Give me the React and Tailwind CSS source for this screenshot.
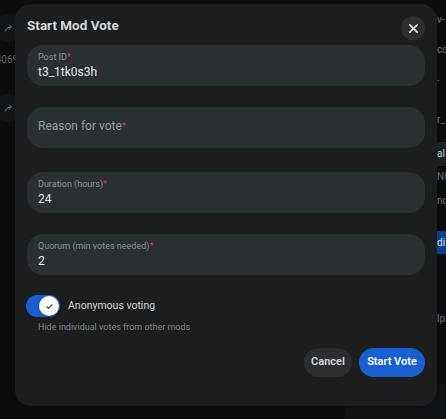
import React from "react";

function ShareIcon() {
  return (
    <svg width="10" height="10" viewBox="0 0 20 20" fill="none" stroke="#6f777c" strokeWidth="2" strokeLinecap="round" strokeLinejoin="round">
      <path d="M3 16c1-5 5-8 11-8" />
      <path d="M11 4l4 4-4 4" />
    </svg>
  );
}

function Field({ label, value, className = "" }) {
  return (
    <div className={`h-[41px] rounded-[16px] bg-[#2a2f31] pl-[11px] pt-[7px] flex flex-col gap-[2px] ${className}`}>
      <div className="text-[9px] leading-[11px] text-[#8b959a]">
        {label}
        <span className="text-[#d9423c]">*</span>
      </div>
      <div className="text-[12px] leading-[15px] text-[#e9ebec]">{value}</div>
    </div>
  );
}

export default function App() {
  return (
    <div className="relative w-[446px] h-[419px] overflow-hidden bg-[#0a0c0d] font-['Roboto',sans-serif]">
      {/* dimmed page behind */}
      <div className="flex h-full">
        <div className="w-[24px] flex flex-col items-center pt-[14px]">
          <div className="w-[28px] h-[28px] rounded-full bg-[#111416] flex items-center justify-center -ml-[6px]">
            <ShareIcon />
          </div>
          <div className="mt-[12px] text-[10px] leading-[12px] text-[#5d6468] -ml-[10px]">4069</div>
          <div className="mt-[28px] w-[28px] h-[28px] rounded-full bg-[#111416] flex items-center justify-center -ml-[6px]">
            <ShareIcon />
          </div>
        </div>
        <div className="flex-1" />
        <div className="w-[9px] flex flex-col text-[10px] leading-[12px] text-[#6a7276] pt-[14px] whitespace-nowrap">
          <div>v-</div>
          <div className="mt-[18px]">co</div>
          <div className="mt-[16px]">.</div>
          <div className="mt-[30px]">r_</div>
          <div className="mt-[16px] h-[24px] bg-[#1b1f21] text-[#c9cdd0] flex items-center">al</div>
          <div className="mt-[5px]">NG</div>
          <div className="mt-[12px]">nc</div>
          <div className="mt-[24px] h-[23px] bg-[#0d3e8c] text-[#dfe6f2] flex items-center">di</div>
          <div className="mt-[59px]">lp</div>
        </div>
      </div>
      <div className="absolute left-[345px] top-[384px] w-[101px] h-[35px] bg-[#0f1214]" />

      {/* modal */}
      <div className="absolute left-[15px] top-[4px] w-[422px] h-[402px] rounded-[16px] bg-[#1b1d1f] px-[12px] pt-[12px] flex flex-col">
        <div className="flex items-start justify-between">
          <div className="text-[13.5px] leading-[18px] font-bold text-[#d5d8da]">Start Mod Vote</div>
          <button className="w-[24px] h-[24px] rounded-full bg-[#2b2f32] flex items-center justify-center">
            <svg width="11" height="11" viewBox="0 0 12 12" stroke="#e4e6e7" strokeWidth="1.8" strokeLinecap="round">
              <path d="M2 2l8 8M10 2l-8 8" />
            </svg>
          </button>
        </div>

        <Field label="Post ID" value="t3_1tk0s3h" className="mt-[5px]" />

        <div className="mt-[21px] h-[41px] rounded-[16px] bg-[#2a2f31] pl-[11px] pb-[3px] flex items-center">
          <div className="text-[12px] leading-[15px] text-[#959ea3]">
            Reason for vote<span className="text-[#d9423c] text-[9px] align-top">*</span>
          </div>
        </div>

        <Field label="Duration (hours)" value="24" className="mt-[24px]" />
        <Field label="Quorum (min votes needed)" value="2" className="mt-[21px]" />

        <div className="mt-[20px] flex items-center">
          <div className="w-[34px] h-[22px] rounded-full bg-[#1a5fd0] flex items-center justify-end pr-[1px] -ml-[1px]">
            <div className="w-[20px] h-[20px] rounded-full bg-white flex items-center justify-center shadow-[0_1px_2px_rgba(0,0,0,0.4)]">
              <svg width="9" height="9" viewBox="0 0 12 12" fill="none" stroke="#3a3f42" strokeWidth="1.6" strokeLinecap="round" strokeLinejoin="round">
                <path d="M2.5 6.3l2.3 2.3 4.7-5" />
              </svg>
            </div>
          </div>
          <div className="ml-[8px] text-[10.5px] text-[#d6d9db]">Anonymous voting</div>
        </div>
        <div className="mt-[4px] pl-[11px] text-[9px] leading-[12px] text-[#7d878c]">Hide individual votes from other mods</div>

        <div className="mt-[15px] flex justify-end gap-[7px]">
          <button className="w-[48px] h-[29px] rounded-full bg-[#2a2e30] text-[11px] font-semibold text-[#d6d9db]">Cancel</button>
          <button className="w-[66px] h-[29px] rounded-full bg-[#1a5fd0] text-[11px] font-semibold text-white">Start Vote</button>
        </div>
      </div>
    </div>
  );
}
